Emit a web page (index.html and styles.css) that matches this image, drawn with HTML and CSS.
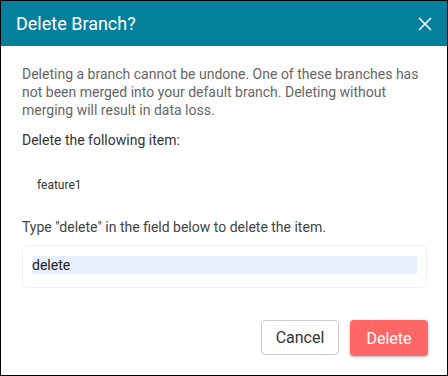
FILE: index.html
```html
<!DOCTYPE html>
<html lang="en">
<head>
  <meta charset="UTF-8" />
  <title>Delete Branch?</title>
  <link rel="stylesheet" href="styles.css">
</head>
<body>

  <div class="dialog">
    <div class="dialog-header">
      <h2>Delete Branch?</h2>
      <button class="close-btn" title="Close">
        <svg width="14" height="14" viewBox="0 0 14 14">
          <path d="M1 1 L13 13 M13 1 L1 13" stroke="#fff" stroke-width="1.6" fill="none" />
        </svg>
      </button>
    </div>

    <div class="dialog-body">
      <p class="warning">Deleting a branch cannot be undone. One of these branches has not been merged into your default branch. Deleting without merging will result in data loss.</p>
      <p class="label">Delete the following item:</p>
      <ul class="item-list">
        <li>feature1</li>
      </ul>
      <p class="hint">Type "delete" in the field below to delete the item.</p>
      <div class="confirm-field">
        <input type="text" id="confirmInput" value="delete" autocomplete="off" />
      </div>
    </div>

    <div class="dialog-footer">
      <button class="btn btn-cancel">Cancel</button>
      <button class="btn btn-delete">Delete</button>
    </div>
  </div>

</body>
</html>
```

FILE: styles.css
```css
body {
  margin: 0;
  font-family: Roboto, 'Liberation Sans', sans-serif;
  background-color: #fff;
}

.dialog {
  width: 448px;
  height: 376px;
  box-sizing: border-box;
  border: 1px solid #000;
  display: flex;
  flex-direction: column;
}

.dialog-header {
  height: 45px;
  background-color: #05809c;
  padding: 0 15px;
  display: flex;
  align-items: center;
  justify-content: space-between;
}

.dialog-header h2 {
  margin: 0;
  font-size: 18px;
  font-weight: 400;
  color: #fff;
}

.close-btn {
  background: none;
  border: none;
  padding: 0;
  width: 14px;
  height: 14px;
  cursor: pointer;
  display: flex;
}

.dialog-body {
  flex: 1;
  padding: 19px 20px 0 21px;
}

.dialog-body p {
  margin: 0;
  font-size: 14px;
  line-height: 18px;
}

.warning {
  color: #666;
}

.label {
  margin-top: 12px !important;
  color: #333;
}

.item-list {
  list-style: none;
  margin: 0;
  padding: 28px 0 0 15px;
  font-size: 12px;
  line-height: 16px;
  color: #333;
}

.hint {
  margin-top: 25px !important;
  color: #444;
}

.confirm-field {
  margin-top: 9px;
  border: 1px solid #f1f1f1;
  border-radius: 5px;
  padding: 10px 9px 13px 9px;
}

.confirm-field input {
  display: block;
  width: 100%;
  box-sizing: border-box;
  height: 18px;
  border: none;
  outline: none;
  padding: 0;
  background-color: #e8f0fe;
  font-family: Roboto, 'Liberation Sans', sans-serif;
  font-size: 14px;
  color: #222;
}

.dialog-footer {
  display: flex;
  justify-content: flex-end;
  gap: 11px;
  padding: 0 19px 19px 0;
}

.btn {
  width: 78px;
  height: 36px;
  border-radius: 4px;
  font-family: Roboto, 'Liberation Sans', sans-serif;
  font-size: 16px;
  cursor: pointer;
}

.btn-cancel {
  height: 35px;
  background-color: #fff;
  border: 1px solid #ccc;
  color: #333;
}

.btn-delete {
  background-color: #ff6666;
  border: none;
  color: #fff;
  box-shadow: 0 1px 3px rgba(0,0,0,0.3);
}
```
